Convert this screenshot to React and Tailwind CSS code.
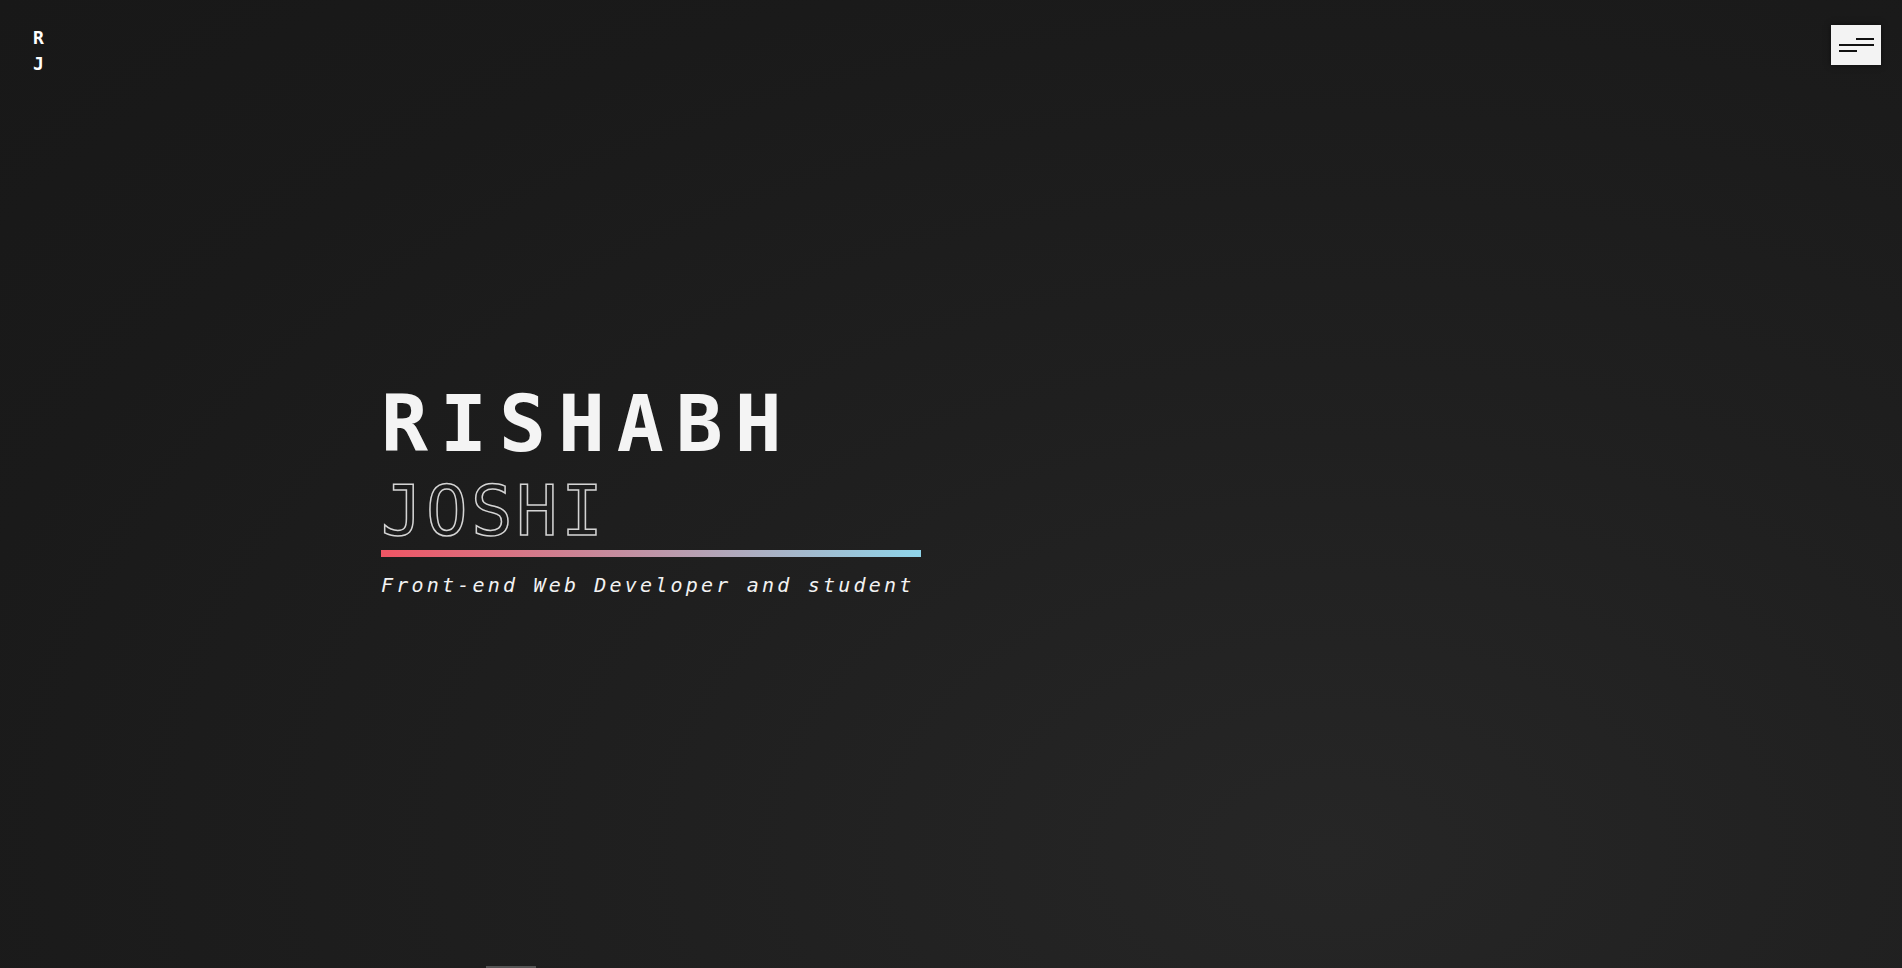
import React from 'react';

const mono = "font-['DejaVu_Sans_Mono','Liberation_Mono',monospace]";

function MenuButton() {
    return (
        <button
            type="button"
            className="flex h-[40px] w-[50px] flex-col items-end justify-center gap-[4px] bg-[#f3f3f3] pr-[7px] shadow-[0_0_6px_rgba(0,0,0,0.5)]"
        >
            <span className="block h-[2px] w-[18px] bg-[#111]" />
            <span className="block h-[2px] w-[35px] bg-[#111]" />
            <span className="mr-[17px] block h-[2px] w-[18px] bg-[#111]" />
        </button>
    );
}

function App() {
    return (
        <div className="relative h-[968px] w-full overflow-hidden bg-[#1b1b1b] bg-[radial-gradient(ellipse_at_70%_88%,#262626_0%,#1f1f1f_40%,#1a1a1a_75%,#181818_100%)]">
            <header className="absolute inset-x-0 top-0 flex items-start justify-between pl-[33px] pr-[21px] pt-[25px]">
                <div className={`${mono} flex flex-col text-[18px] font-bold leading-[26px] text-white`}>
                    <span>R</span>
                    <span>J</span>
                </div>
                <MenuButton />
            </header>

            <main className="flex h-full items-center pl-[381px]">
                <div className="mt-[14px] flex flex-col">
                    <h1 className={`${mono} text-[78px] font-bold leading-[80px] tracking-[12px] text-[#f4f4f4]`}>
                        RISHABH
                    </h1>
                    <h2 className={`${mono} mt-[11px] text-[69px] font-normal leading-[72px] tracking-[3.5px] text-transparent [-webkit-text-stroke:1.5px_#d4d4d4]`}>
                        JOSHI
                    </h2>
                    <div className="mt-[3px] h-[7px] w-[540px] bg-[linear-gradient(90deg,#ef5564,#8fd5ea)]" />
                    <p className={`${mono} mt-[15px] text-[20px] italic leading-[26px] tracking-[3.2px] text-[#f2f2f2]`}>
                        Front-end Web Developer and student
                    </p>
                </div>
            </main>

            <div className="absolute bottom-0 left-[486px] h-[2px] w-[50px] bg-[#555]" />
        </div>
    );
}

export default App;
